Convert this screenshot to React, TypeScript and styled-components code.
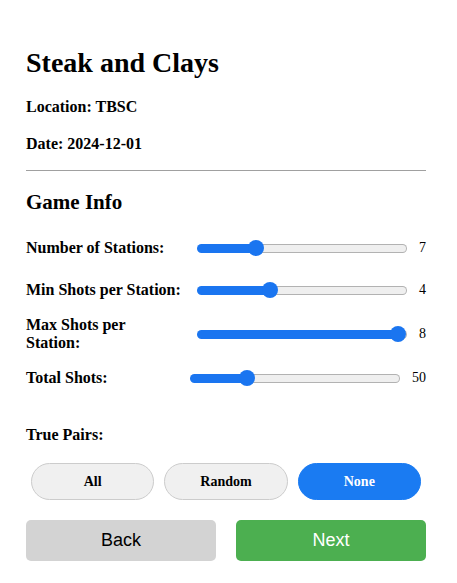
import { useState, type CSSProperties } from 'react'
import styled, { createGlobalStyle } from 'styled-components'

const GlobalStyle = createGlobalStyle`
  body {
    margin: 0;
    background: #fff;
    font-family: "Liberation Serif", "Times New Roman", serif;
    color: #000;
  }
`

interface SliderSetting {
  label: string
  min: number
  max: number
  value: number
}

const settings: SliderSetting[] = [
  { label: 'Number of Stations:', min: 1, max: 24, value: 7 },
  { label: 'Min Shots per Station:', min: 1, max: 10, value: 4 },
  { label: 'Max Shots per Station:', min: 1, max: 8, value: 8 },
  { label: 'Total Shots:', min: 0, max: 200, value: 50 }
]

const pairOptions = ['All', 'Random', 'None']

const App = () => {
  const [values, setValues] = useState(settings.map((s) => s.value))
  const [pairs, setPairs] = useState('None')

  return (
    <>
      <GlobalStyle />
      <Page>
        <Title>Steak and Clays</Title>
        <MetaBlock>
          <Meta>Location: TBSC</Meta>
          <Meta>Date: 2024-12-01</Meta>
        </MetaBlock>
        <Divider />
        <SectionTitle>Game Info</SectionTitle>
        {settings.map((s, i) => {
          const fill = (values[i] - s.min) / (s.max - s.min)
          return (
            <SliderRow key={s.label}>
              <SliderLabel>{s.label}</SliderLabel>
              <Range
                type="range"
                min={s.min}
                max={s.max}
                value={values[i]}
                style={{ '--fill': fill } as CSSProperties}
                onChange={(e) => {
                  const next = [...values]
                  next[i] = Number(e.target.value)
                  setValues(next)
                }}
              />
              <SliderValue>{values[i]}</SliderValue>
            </SliderRow>
          )
        })}
        <PairsLabel>True Pairs:</PairsLabel>
        <ToggleGroup>
          {pairOptions.map((opt) => (
            <Toggle key={opt} $active={pairs === opt} onClick={() => setPairs(opt)}>
              {opt}
            </Toggle>
          ))}
        </ToggleGroup>
        <NavRow>
          <NavButton>Back</NavButton>
          <NavButton $primary>Next</NavButton>
        </NavRow>
      </Page>
    </>
  )
}

export default App

const BLUE = '#1a75f0'

const Page = styled.div`
  width: 400px;
  padding: 47px 26px 20px;
  display: flex;
  flex-direction: column;
`

const Title = styled.h1`
  margin: 0 0 19px;
  font-size: 28px;
  line-height: 32px;
  font-weight: bold;
`

const MetaBlock = styled.div`
  display: flex;
  flex-direction: column;
  gap: 19px;
  margin-bottom: 17px;
`

const Meta = styled.p`
  margin: 0;
  font-size: 16px;
  line-height: 18px;
  font-weight: bold;
`

const Divider = styled.hr`
  width: 100%;
  margin: 0 0 19px;
  border: none;
  border-top: 1px solid #a0a0a0;
`

const SectionTitle = styled.h2`
  margin: 0 0 18px;
  font-size: 21px;
  line-height: 24px;
  font-weight: bold;
`

const SliderRow = styled.div`
  display: flex;
  align-items: center;
  min-height: 32px;
  margin-bottom: 10px;
`

const SliderLabel = styled.label`
  flex: 1;
  min-width: 0;
  font-size: 16px;
  line-height: 18px;
  font-weight: bold;
`

const Range = styled.input`
  -webkit-appearance: none;
  appearance: none;
  box-sizing: border-box;
  width: 210px;
  height: 9px;
  margin: 0 12px 0 14px;
  border: 1px solid transparent;
  border-radius: 5px;
  background:
    linear-gradient(to right, ${BLUE} calc(8px + var(--fill) * (100% - 16px)), transparent 0) border-box,
    linear-gradient(#efefef, #efefef) padding-box,
    linear-gradient(#b2b2b2, #b2b2b2) border-box;
  outline: none;

  &::-webkit-slider-thumb {
    -webkit-appearance: none;
    appearance: none;
    width: 16px;
    height: 16px;
    border-radius: 50%;
    background: ${BLUE};
    border: none;
  }
`

const SliderValue = styled.span`
  font-size: 14px;
`

const PairsLabel = styled.p`
  margin: 22px 0 19px;
  font-size: 16px;
  line-height: 18px;
  font-weight: bold;
`

const ToggleGroup = styled.div`
  display: flex;
  margin-bottom: 20px;
`

const Toggle = styled.button<{ $active?: boolean }>`
  flex: 1;
  margin: 0 5px;
  height: 37px;
  border-radius: 20px;
  border: 1px solid ${({ $active }) => ($active ? '#1a7bf2' : '#cccccc')};
  background: ${({ $active }) => ($active ? '#1a7bf2' : '#f0f0f0')};
  color: ${({ $active }) => ($active ? '#fff' : '#000')};
  font-family: "Liberation Serif", "Times New Roman", serif;
  font-size: 14px;
  font-weight: bold;
  cursor: pointer;
`

const NavRow = styled.div`
  display: flex;
  gap: 20px;
`

const NavButton = styled.button<{ $primary?: boolean }>`
  flex: 1;
  height: 41px;
  border: none;
  border-radius: 5px;
  background: ${({ $primary }) => ($primary ? '#4caf50' : '#d3d3d3')};
  color: ${({ $primary }) => ($primary ? '#fff' : '#000')};
  font-family: "Liberation Sans", Arial, sans-serif;
  font-size: 18px;
  cursor: pointer;
`
